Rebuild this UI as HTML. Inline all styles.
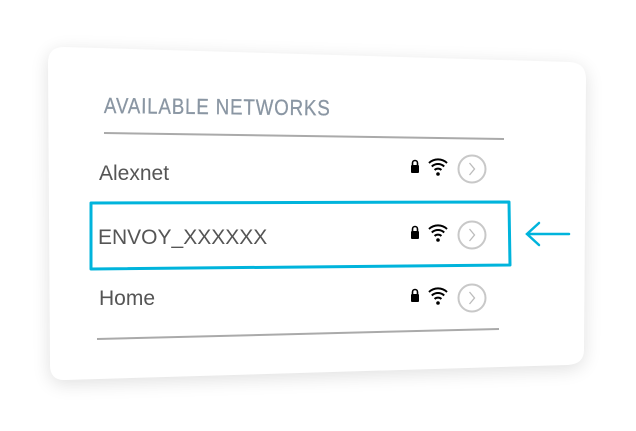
<!DOCTYPE html>
<html><head><style>
html,body{margin:0;padding:0;background:#fff;width:636px;height:431px;overflow:hidden;position:relative;font-family:"Liberation Sans",sans-serif}
.t{position:absolute;color:#555;font-size:21px;line-height:21px;white-space:nowrap}
.h{position:absolute;left:104px;top:93px;font-family:"Liberation Sans",sans-serif;font-size:22px;color:#8a96a3;letter-spacing:1px;transform:rotate(0.6deg) scaleX(0.85);transform-origin:left;white-space:nowrap;-webkit-text-stroke:0.3px #8a96a3}
</style></head><body>
<svg width="636" height="431" style="position:absolute;left:0;top:0">
<defs><filter id="s" x="-10%" y="-10%" width="120%" height="130%"><feGaussianBlur stdDeviation="9"/></filter></defs>
<path d="M64,47 L570,62 Q586,63 586,79 L584,350 Q584,364 568,365 L66,380 Q50,381 50,365 L48,63 Q48,47 64,47 Z" fill="#000" opacity="0.12" filter="url(#s)" transform="translate(0,4)"/>
<path d="M64,47 L570,62 Q586,63 586,79 L584,350 Q584,364 568,365 L66,380 Q50,381 50,365 L48,63 Q48,47 64,47 Z" fill="#fff"/>
<line x1="104" y1="133" x2="504" y2="139" stroke="#aaa" stroke-width="2"/>
<line x1="97" y1="339" x2="499" y2="329" stroke="#aaa" stroke-width="2"/>
<polygon points="91,203 509,202 510,265 91,269" fill="none" stroke="#00b4dc" stroke-width="3" stroke-linejoin="round"/>
<g id="r1">
<rect x="411" y="165" width="8" height="8" rx="1" fill="#000"/><path d="M412.5,165 v-2 a2.5,2.5 0 0 1 5,0 v2" fill="none" stroke="#000" stroke-width="1.6"/>
<path d="M429,163 a13,13 0 0 1 18,0 M431.8,166.5 a9,9 0 0 1 12.4,0 M434.6,170 a5,5 0 0 1 6.8,0" fill="none" stroke="#000" stroke-width="2"/><circle cx="438" cy="174" r="1.8"/>
<circle cx="472" cy="169" r="13.5" fill="none" stroke="#c8c8c8" stroke-width="2"/><path d="M469.5,163 l5,6 l-5,6" fill="none" stroke="#bbb" stroke-width="1.3"/>
</g>
<use href="#r1" transform="translate(0,66)"/>
<use href="#r1" transform="translate(0,129)"/>
<path d="M527,234 H569 M539,223 L527,234 L539,245" fill="none" stroke="#00b4dc" stroke-width="2.5" stroke-linecap="round"/>
</svg>
<div class="h">AVAILABLE NETWORKS</div>
<div class="t" style="left:99px;top:163px">Alexnet</div>
<div class="t" style="left:98px;top:227px">ENVOY_XXXXXX</div>
<div class="t" style="left:99px;top:288px">Home</div>
</body></html>
